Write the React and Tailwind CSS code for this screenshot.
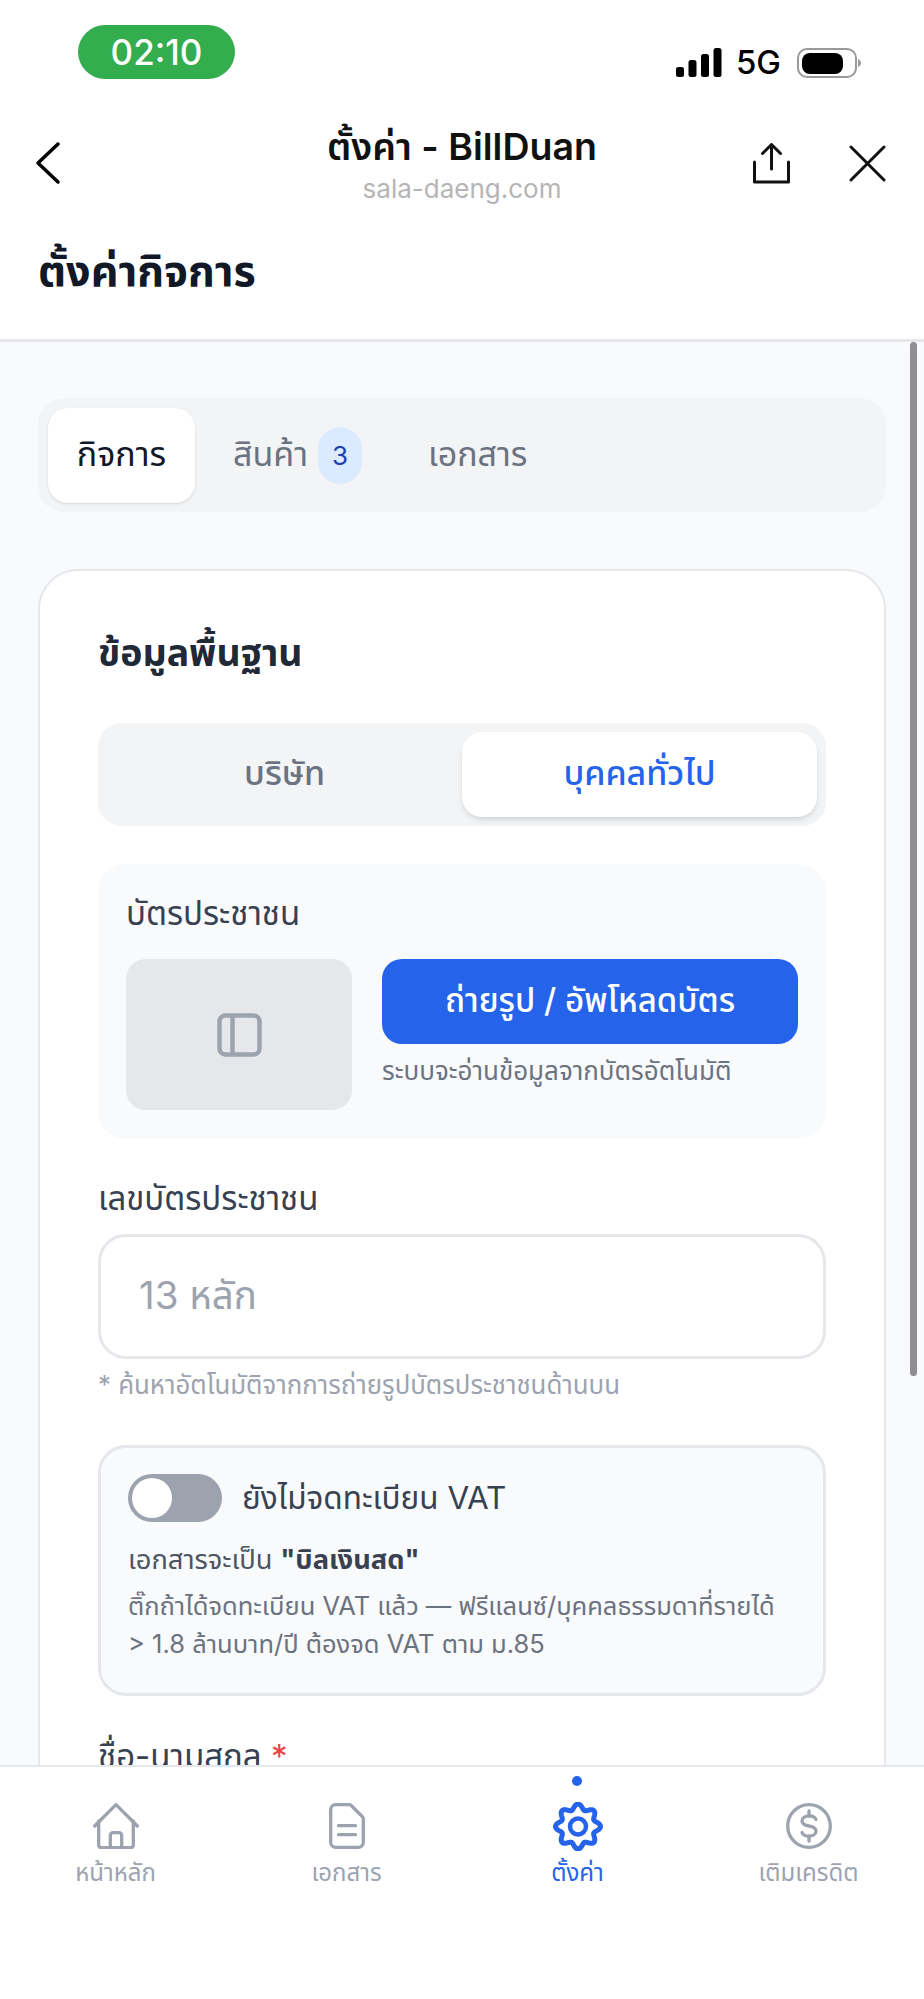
import React from "react";

const F = { fontFamily: '"Inter", "Noto Sans Thai", "Noto Sans Thai Looped", "Noto Sans", sans-serif' };

function gearPath() {
  const pts = [];
  for (let i = 0; i < 240; i++) {
    const t = (i / 240) * Math.PI * 2;
    const r = 19.800 + 2.700 * Math.cos(8 * t);
    pts.push(`${(25 + r * Math.sin(t)).toFixed(2)} ${(24.500 - r * Math.cos(t)).toFixed(2)}`);
  }
  return `M${pts.join("L")}Z`;
}

function StatusIcons() {
  return (
    <div className="flex items-center">
      <svg width="46" height="30" viewBox="0 0 46 30" className="block">
        <rect x="0" y="19" width="8" height="10" rx="2.500" fill="#000" />
        <rect x="12.500" y="12" width="8" height="17" rx="2.500" fill="#000" />
        <rect x="25" y="6" width="8" height="23" rx="2.500" fill="#000" />
        <rect x="37.500" y="0" width="8" height="29" rx="2.500" fill="#000" />
      </svg>
      <span className="ml-[14px] text-[33px] leading-none font-medium text-black">5G</span>
      <svg width="65" height="30" viewBox="0 0 65 30" className="ml-[16px] block">
        <rect x="1" y="1" width="58" height="28" rx="9" fill="none" stroke="#9a9a9a" strokeWidth="2" />
        <rect x="5" y="5" width="41" height="21" rx="8" fill="#000" />
        <path d="M61 11c2 1 3 2.500 3 4s-1 3-3 4z" fill="#9a9a9a" />
      </svg>
    </div>
  );
}

function NavItem({ label, active, children }) {
  return (
    <div className={`flex flex-col items-center w-[231px] ${active ? "text-[#2563eb]" : "text-[#9ca3af]"}`}>
      <div className="h-[46px] flex items-center justify-center">{children}</div>
      <span className="mt-[6px] text-[24px] leading-[36px]">{label}</span>
    </div>
  );
}

export default function App() {
  return (
    <div className="relative w-[924px] h-[1999px] overflow-hidden bg-white flex flex-col" style={F}>
      <div className="h-[96px] shrink-0 flex items-start justify-between pl-[78px] pr-[62px] pt-[25px]">
        <div className="w-[157px] h-[54px] rounded-full bg-[#34ad4f] flex items-center justify-center text-white text-[35px] font-medium leading-none">
          02:10
        </div>
        <div className="pt-[21px]"><StatusIcons /></div>
      </div>

      <div className="h-[120px] shrink-0 relative flex items-center justify-between pl-[34px] pr-[38px] pt-[14px]">
        <svg width="28" height="44" viewBox="0 0 28 44" fill="none" stroke="#000" strokeWidth="3.500" strokeLinecap="round" strokeLinejoin="round">
          <path d="M24 3 4 22l20 19" />
        </svg>
        <div className="absolute left-0 right-0 top-[26px] flex flex-col items-center">
          <span className="text-[37.500px] leading-[50px] font-semibold text-[#111]">ตั้งค่า - BillDuan</span>
          <span className="text-[26px] leading-[33px] text-[#b5b5b5]">sala-daeng.com</span>
        </div>
        <div className="flex items-center gap-[59px]">
          <svg width="37" height="41" viewBox="0 0 37 41" fill="none" stroke="#111" strokeWidth="3" strokeLinecap="round" strokeLinejoin="round">
            <path d="M18.500 26V2M9.500 10.500l9-9 9 9" />
            <path d="M1.500 19v20h34V19" />
          </svg>
          <svg width="37" height="37" viewBox="0 0 37 37" fill="none" stroke="#111" strokeWidth="3" strokeLinecap="round">
            <path d="M2 2l33 33M35 2 2 35" />
          </svg>
        </div>
      </div>

      <div className="h-[126px] shrink-0 pl-[38px] pt-[24px] border-b-[3px] border-[#e5e7eb]">
        <h1 className="text-[43px] leading-[60px] font-bold text-[#111827]">ตั้งค่ากิจการ</h1>
      </div>

      <div className="relative flex-1 min-h-0 overflow-hidden bg-[#f9fafb] px-[38px] pt-[56px]">
        <div className="absolute right-[7px] top-0 w-[7px] h-[1034px] rounded-full bg-[#8e8e93]" />

        <div className="h-[114px] rounded-[26px] bg-[#f3f4f6] flex items-center px-[10px] text-[34px]">
          <div className="w-[147px] h-[95px] pb-[3px] rounded-[20px] bg-white shadow-sm flex items-center justify-center text-[#111827]">กิจการ</div>
          <div className="ml-[38px] flex items-center text-[#6b7280]">
            <span className="pb-[3px]">สินค้า</span>
            <span className="ml-[10px] w-[44px] h-[57px] rounded-full bg-[#dbeafe] text-[#1e40af] text-[26px] flex items-center justify-center">3</span>
          </div>
          <div className="ml-[66px] pb-[3px] text-[#6b7280]">เอกสาร</div>
        </div>

        <div className="mt-[57px] w-[848px] rounded-[40px] border-2 border-[#e5e7eb] bg-white px-[58px] pt-[54px] pb-[60px]">
          <h2 className="text-[37.500px] leading-[56px] font-bold text-[#1f2937]">ข้อมูลพื้นฐาน</h2>

          <div className="mt-[42px] h-[103px] rounded-[24px] bg-[#f3f4f6] flex items-center p-[9px] text-[34px] font-medium">
            <div className="flex-1 pb-[5px] text-center text-[#6b7280]">บริษัท</div>
            <div className="flex-1 h-[85px] pb-[5px] rounded-[20px] bg-white shadow-md flex items-center justify-center text-[#2563eb]">บุคคลทั่วไป</div>
          </div>

          <div className="mt-[38px] h-[275px] rounded-[28px] bg-[#f9fafb] px-[28px] pt-[26px]">
            <div className="text-[33px] leading-[46px] text-[#374151]">บัตรประชาชน</div>
            <div className="mt-[23px] flex gap-[30px]">
              <div className="w-[226px] h-[151px] rounded-[20px] bg-[#e5e7eb] flex items-center justify-center">
                <svg width="45" height="44" viewBox="0 0 45 44" fill="none" stroke="#9ca3af" strokeWidth="4.500" strokeLinejoin="round">
                  <rect x="2.500" y="2.500" width="40" height="39" rx="6" />
                  <path d="M15.500 2.500v39" />
                </svg>
              </div>
              <div className="flex-1">
                <div className="h-[85px] pb-[2px] rounded-[20px] bg-[#2563eb] flex items-center justify-center text-white text-[33px] font-medium">ถ่ายรูป / อัพโหลดบัตร</div>
                <div className="mt-[7px] text-[26px] leading-[39px] text-[#6b7280]">ระบบจะอ่านข้อมูลจากบัตรอัตโนมัติ</div>
              </div>
            </div>
          </div>

          <div className="mt-[36px] text-[33px] leading-[46px] text-[#374151]">เลขบัตรประชาชน</div>
          <div className="mt-[13px] h-[125px] pb-[2px] rounded-[28px] border-[3px] border-[#e5e7eb] bg-white flex items-center pl-[38px] text-[38.500px] text-[#9ca3af]">13 หลัก</div>
          <div className="mt-[7px] text-[25.800px] leading-[38px] text-[#9ca3af]">* ค้นหาอัตโนมัติจากการถ่ายรูปบัตรประชาชนด้านบน</div>

          <div className="mt-[41px] h-[251px] rounded-[28px] border-[3px] border-[#e5e7eb] bg-[#f9fafb] px-[27px] pt-[26px]">
            <div className="flex items-center">
              <div className="w-[94px] h-[48px] rounded-full bg-[#9ca3af] flex items-center pl-[4px]">
                <div className="w-[40px] h-[40px] rounded-full bg-white" />
              </div>
              <span className="ml-[20px] text-[31.500px] leading-[48px] text-[#374151]">ยังไม่จดทะเบียน VAT</span>
            </div>
            <div className="mt-[17px] text-[27.300px] leading-[42px] text-[#4b5563]">เอกสารจะเป็น <b className="font-bold text-[#374151]">"บิลเงินสด"</b></div>
            <div className="mt-[6px] text-[25.500px] leading-[38px] text-[#6b7280]">
              ติ๊กถ้าได้จดทะเบียน VAT แล้ว — ฟรีแลนซ์/บุคคลธรรมดาที่รายได้ <br />
              &gt; 1.8 ล้านบาท/ปี ต้องจด VAT ตาม ม.85
            </div>
          </div>

          <div className="mt-[37px] text-[33px] leading-[46px] text-[#374151]">ชื่อ-นามสกุล <span className="text-[#ef4444]">*</span></div>
        </div>
      </div>

      <div className="relative h-[234px] shrink-0 bg-white border-t-[2px] border-[#e5e7eb] pt-[36px] flex">
        <div className="absolute left-[572px] top-[9px] w-[10px] h-[10px] rounded-full bg-[#2563eb]" />
        <NavItem label="หน้าหลัก">
          <svg width="46" height="46" viewBox="0 0 46 46" fill="none" stroke="currentColor" strokeWidth="3.300" strokeLinecap="round" strokeLinejoin="round">
            <path d="M1.700 23 23 1.700 44.300 23" />
            <path d="M5.700 18v24a2.700 2.700 0 0 0 2.700 2.700h29.200a2.700 2.700 0 0 0 2.700-2.700V18" />
            <path d="M17.300 44.700V32.500a2.800 2.800 0 0 1 2.800-2.800h5.800a2.800 2.800 0 0 1 2.800 2.800v12.200" />
          </svg>
        </NavItem>
        <NavItem label="เอกสาร">
          <svg width="36" height="46" viewBox="0 0 36 46" fill="none" stroke="currentColor" strokeWidth="3.300" strokeLinecap="round" strokeLinejoin="round">
            <path d="M6.700 1.700h13.500a3 3 0 0 1 2 .8L33.400 13.700a3 3 0 0 1 .9 2.100V39.300a5 5 0 0 1-5 5H6.700a5 5 0 0 1-5-5V6.700a5 5 0 0 1 5-5z" />
            <path d="M9.500 22.700h17M9.500 31.700h17" />
          </svg>
        </NavItem>
        <NavItem label="ตั้งค่า" active>
          <svg width="50" height="49" viewBox="0 0 50 49" fill="none" stroke="currentColor" strokeWidth="5" strokeLinejoin="round">
            <path d={gearPath()} />
            <circle cx="25" cy="24.500" r="8" strokeWidth="4.500" />
          </svg>
        </NavItem>
        <NavItem label="เติมเครดิต">
          <svg width="46" height="46" viewBox="0 0 46 46" fill="none" stroke="currentColor" strokeWidth="3.300" strokeLinecap="round">
            <circle cx="23" cy="23" r="21.300" />
            <path d="M30 16.500c-.8-2.300-3.500-3.700-7-3.700-4 0-7 2.200-7 5.200 0 3.300 3 4.300 7 5s7 1.800 7 5c0 3-3 5.200-7 5.200-3.500 0-6.200-1.400-7-3.700" />
            <path d="M23 8v5M23 33.200V38" />
          </svg>
        </NavItem>
      </div>
    </div>
  );
}
